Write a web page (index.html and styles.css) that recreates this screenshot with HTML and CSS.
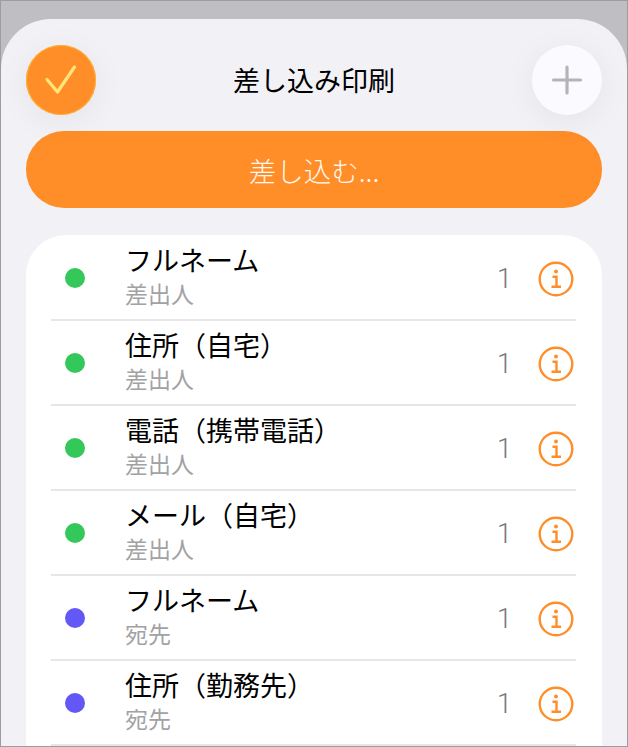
FILE: index.html
```html
<!DOCTYPE html>
<html lang="ja">
<head>
    <meta charset="UTF-8">
    <meta name="viewport" content="width=device-width, initial-scale=1.0">
    <title>差し込み印刷</title>
    <link rel="stylesheet" href="styles.css">
</head>
<body>
    <div class="sheet">
        <header class="top-bar">
            <button class="round-btn done-btn" type="button" aria-label="完了">
                <svg width="70" height="70" viewBox="0 0 70 70"><path d="M21 34.500L31.500 47L48.500 22" fill="none" stroke="#ffe57a" stroke-width="3.200" stroke-linecap="round" stroke-linejoin="round"/></svg>
            </button>
            <h1 class="title">差し込み印刷</h1>
            <button class="round-btn add-btn" type="button" aria-label="追加">
                <svg width="70" height="70" viewBox="0 0 70 70"><path d="M35 22V48M21.500 35H48.500" fill="none" stroke="#b3b3b9" stroke-width="3.200" stroke-linecap="round"/></svg>
            </button>
        </header>

        <button class="merge-btn" type="button">差し込む...</button>

        <ul class="field-list">
            <li class="field-row">
                <span class="dot dot-sender"></span>
                <div class="field-text"><div class="field-name">フルネーム</div><div class="field-sub">差出人</div></div>
                <span class="field-count">1</span>
                <svg class="info-icon" width="36" height="36" viewBox="0 0 36 36"><use href="#info"/></svg>
            </li>
            <li class="field-row">
                <span class="dot dot-sender"></span>
                <div class="field-text"><div class="field-name">住所（自宅）</div><div class="field-sub">差出人</div></div>
                <span class="field-count">1</span>
                <svg class="info-icon" width="36" height="36" viewBox="0 0 36 36"><use href="#info"/></svg>
            </li>
            <li class="field-row">
                <span class="dot dot-sender"></span>
                <div class="field-text"><div class="field-name">電話（携帯電話）</div><div class="field-sub">差出人</div></div>
                <span class="field-count">1</span>
                <svg class="info-icon" width="36" height="36" viewBox="0 0 36 36"><use href="#info"/></svg>
            </li>
            <li class="field-row">
                <span class="dot dot-sender"></span>
                <div class="field-text"><div class="field-name">メール（自宅）</div><div class="field-sub">差出人</div></div>
                <span class="field-count">1</span>
                <svg class="info-icon" width="36" height="36" viewBox="0 0 36 36"><use href="#info"/></svg>
            </li>
            <li class="field-row">
                <span class="dot dot-recipient"></span>
                <div class="field-text"><div class="field-name">フルネーム</div><div class="field-sub">宛先</div></div>
                <span class="field-count">1</span>
                <svg class="info-icon" width="36" height="36" viewBox="0 0 36 36"><use href="#info"/></svg>
            </li>
            <li class="field-row">
                <span class="dot dot-recipient"></span>
                <div class="field-text"><div class="field-name">住所（勤務先）</div><div class="field-sub">宛先</div></div>
                <span class="field-count">1</span>
                <svg class="info-icon" width="36" height="36" viewBox="0 0 36 36"><use href="#info"/></svg>
            </li>
        </ul>
    </div>

    <svg class="icon-defs" width="0" height="0">
        <symbol id="info" viewBox="0 0 36 36">
            <circle cx="18" cy="18" r="16.300" fill="none" stroke="#ff8d28" stroke-width="2.400"/>
            <circle cx="18" cy="10.500" r="2" fill="#ff8d28"/>
            <path d="M14.500 15.800H18.500V25.500M13.500 25.800H23" fill="none" stroke="#ff8d28" stroke-width="2.400"/>
        </symbol>
    </svg>
</body>
</html>
```

FILE: styles.css
```css
html, body {
    margin: 0;
}
body {
    box-sizing: border-box;
    height: 747px;
    overflow: hidden;
    padding-top: 18px;
    background-color: #bfbec3;
    border: 1px solid #9d9da1;
    font-family: "Noto Sans CJK JP", "Liberation Sans", sans-serif;
}
.sheet {
    box-sizing: border-box;
    height: 727px;
    padding: 26px 25px 0;
    background-color: #f1f1f6;
    border-radius: 50px 50px 0 0;
}
.top-bar {
    display: flex;
    align-items: center;
    justify-content: space-between;
    height: 70px;
}
.title {
    margin: 0 0 1px;
    font-size: 27px;
    font-weight: 400;
    color: #000;
}
.round-btn {
    width: 70px;
    height: 70px;
    padding: 0;
    border: none;
    border-radius: 50%;
    box-shadow: 0 6px 34px rgba(0, 0, 0, 0.06);
}
.round-btn svg {
    display: block;
}
.done-btn {
    background-color: #ff8d28;
    box-shadow: 0 0 0 1px #ffb233 inset, 0 6px 34px rgba(0, 0, 0, 0.06);
}
.add-btn {
    background-color: #fbfbff;
}
.merge-btn {
    display: block;
    width: 100%;
    height: 77px;
    margin-top: 16px;
    padding: 0;
    border: none;
    border-radius: 38px;
    background-color: #ff8d28;
    color: #fff8f0;
    font-family: inherit;
    font-size: 27.500px;
    font-weight: 300;
}
.field-list {
    list-style: none;
    margin: 27px 0 0;
    padding: 1px 26px 0 25px;
    background: #fff;
    border-radius: 40px 40px 0 0;
}
.field-row {
    display: flex;
    align-items: center;
    box-sizing: border-box;
    height: 85px;
    border-bottom: 2px solid #e6e6e9;
}
.dot {
    flex: none;
    width: 20px;
    height: 20px;
    margin-left: 14px;
    border-radius: 50%;
}
.dot-sender {
    background-color: #34c85a;
}
.dot-recipient {
    background-color: #6358f5;
}
.field-text {
    flex: 1;
    margin: 0 0 3px 40px;
}
.field-name {
    font-size: 27px;
    line-height: 34px;
    color: #000;
}
.field-sub {
    font-size: 23px;
    line-height: 32px;
    color: #a2a2a5;
}
.field-count {
    margin-top: 3px;
    font-family: Roboto, sans-serif;
    font-size: 27px;
    font-weight: 300;
    color: #77777c;
}
.info-icon {
    flex: none;
    margin: 2px 2px 0 26px;
}
.icon-defs {
    position: absolute;
}
```
